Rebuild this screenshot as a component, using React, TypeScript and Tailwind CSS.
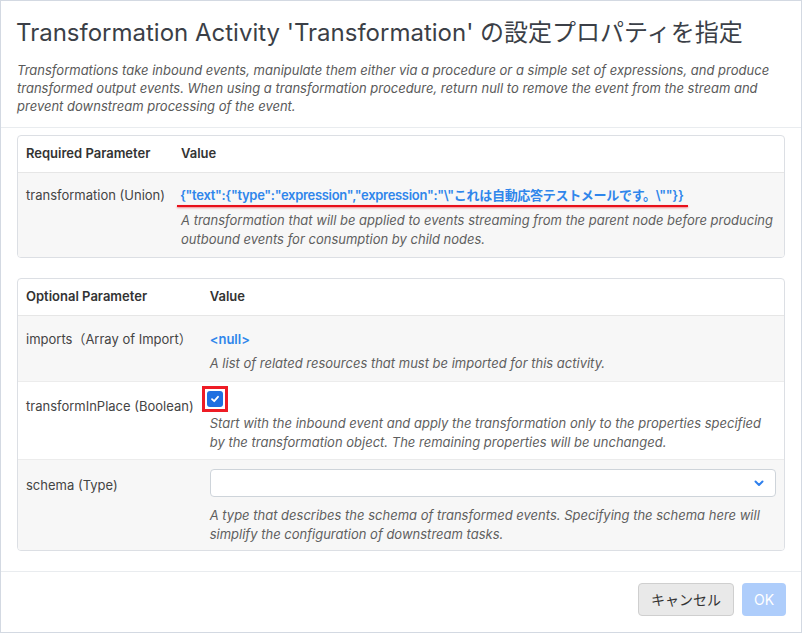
import React from "react";

const font = { fontFamily: "Inter, 'Noto Sans CJK JP', sans-serif" };

function Chevron() {
  return (
    <svg width="12" height="12" viewBox="0 0 12 12" className="text-[#2f80ed]">
      <path d="M2.5 4.5 L6 8 L9.5 4.5" fill="none" stroke="currentColor" strokeWidth="2" strokeLinecap="round" strokeLinejoin="round" />
    </svg>
  );
}

export default function App() {
  return (
    <div style={font} className="w-[802px] h-[633px] border border-[#d3d9e2] bg-white flex flex-col text-[#444] overflow-hidden">
      {/* header */}
      <div className="px-4 pt-[16px] pb-[12px] border-b border-[#e9ecef]">
        <h1 className="text-[24px] leading-[32px] text-[#3b3f47] font-normal ml-[-1px]">
          Transformation Activity 'Transformation' の設定プロパティを指定
        </h1>
        <p className="mt-[12px] text-[13px] leading-[18px] italic text-[#5a5a5a]">
          Transformations take inbound events, manipulate them either via a procedure or a simple set of expressions, and produce
          transformed output events. When using a transformation procedure, return null to remove the event from the stream and
          prevent downstream processing of the event.
        </p>
      </div>

      {/* body */}
      <div className="flex-1 min-h-0 px-4 pt-[7px] flex flex-col gap-[20px]">
        {/* required */}
        <div className="border border-[#dcdfe4] rounded-[4px] overflow-hidden">
          <table className="w-full border-collapse text-[13px]">
            <thead>
              <tr className="h-[36px]">
                <th className="text-left font-semibold text-[#333] pl-[8px] pr-[8px] whitespace-nowrap w-[1%]">Required Parameter</th>
                <th className="text-left font-semibold text-[#333] px-[8px]">Value</th>
              </tr>
            </thead>
            <tbody>
              <tr className="bg-[#f7f7f7] border-t border-[#e6e6e6]">
                <td className="align-top pl-[8px] pr-[8px] pt-[12px] whitespace-nowrap leading-[20px]">transformation (Union)</td>
                <td className="align-top px-[8px] pt-[12px] pb-[8px]">
                  <span className="relative inline-block font-semibold text-[#2f86eb] leading-[20px] tracking-[-0.3px] ml-[-1px]">
                    {'{"text":{"type":"expression","expression":"\\"これは自動応答テストメールです。\\""}}'}
                    <span className="absolute left-[-3px] right-[-4px] bottom-[-2px] h-[2px] bg-[#e8101a] shadow-[0_1px_2px_rgba(232,16,26,0.5)]" />
                  </span>
                  <div className="mt-[6px] italic text-[#5f5f5f] leading-[19px]">
                    A transformation that will be applied to events streaming from the parent node before producing outbound events for consumption by child nodes.
                  </div>
                </td>
              </tr>
            </tbody>
          </table>
        </div>

        {/* optional */}
        <div className="border border-[#dcdfe4] rounded-[4px] overflow-hidden">
          <table className="w-full border-collapse text-[13px]">
            <thead>
              <tr className="h-[36px]">
                <th className="text-left font-semibold text-[#333] pl-[8px] pr-[8px] whitespace-nowrap w-[1%]">Optional Parameter</th>
                <th className="text-left font-semibold text-[#333] px-[8px]">Value</th>
              </tr>
            </thead>
            <tbody>
              <tr className="bg-[#f7f7f7] border-t border-[#e6e6e6]">
                <td className="align-top pl-[8px] pr-[8px] pt-[13px] whitespace-nowrap leading-[20px]">imports（Array of Import）</td>
                <td className="align-top px-[8px] pt-[13px] pb-[8px]">
                  <div className="font-semibold text-[#2f86eb] leading-[20px]">&lt;null&gt;</div>
                  <div className="mt-[5px] italic text-[#5f5f5f] leading-[19px]">
                    A list of related resources that must be imported for this activity.
                  </div>
                </td>
              </tr>
              <tr className="bg-white border-t border-[#ececec]">
                <td className="align-top pl-[8px] pr-[8px] pt-[14px] whitespace-nowrap leading-[20px]">transformInPlace (Boolean)</td>
                <td className="align-top px-[8px] pt-[4px] pb-[7px]">
                  <div className="relative w-[26px] h-[26px] ml-[-8px] border-[3px] border-[#ee1c25] flex items-center justify-center">
                    <div className="w-[16px] h-[16px] rounded-[3px] bg-[#1f6fe0] flex items-center justify-center">
                      <svg width="10" height="10" viewBox="0 0 10 10">
                        <path d="M2 5.2 L4.2 7.2 L8 2.8" fill="none" stroke="white" strokeWidth="1.8" strokeLinecap="round" strokeLinejoin="round" />
                      </svg>
                    </div>
                  </div>
                  <div className="mt-[2px] italic text-[#5f5f5f] leading-[19px]">
                    Start with the inbound event and apply the transformation only to the properties specified by the transformation object. The remaining properties will be unchanged.
                  </div>
                </td>
              </tr>
              <tr className="bg-[#f7f7f7] border-t border-[#ececec]">
                <td className="align-top pl-[8px] pr-[8px] pt-[15px] whitespace-nowrap leading-[20px]">schema (Type)</td>
                <td className="align-top px-[8px] pt-[9px] pb-[6px]">
                  <div className="h-[28px] bg-white border border-[#ced4da] rounded-[4px] flex items-center justify-end pr-[10px]">
                    <Chevron />
                  </div>
                  <div className="mt-[9px] italic text-[#5f5f5f] leading-[19px]">
                    A type that describes the schema of transformed events. Specifying the schema here will simplify the configuration of downstream tasks.
                  </div>
                </td>
              </tr>
            </tbody>
          </table>
        </div>
      </div>

      {/* footer */}
      <div className="shrink-0 border-t border-[#e9ecef] pt-[11px] pb-[16px] px-[15px] flex justify-end gap-[8px]">
        <button className="h-[33px] px-[12px] rounded-[4px] border border-[#cfcfcf] bg-[#e9e9e9] text-[#333] text-[14px]">
          キャンセル
        </button>
        <button className="h-[33px] w-[44px] rounded-[4px] bg-[#aecdfb] text-white text-[14px]">OK</button>
      </div>
    </div>
  );
}
